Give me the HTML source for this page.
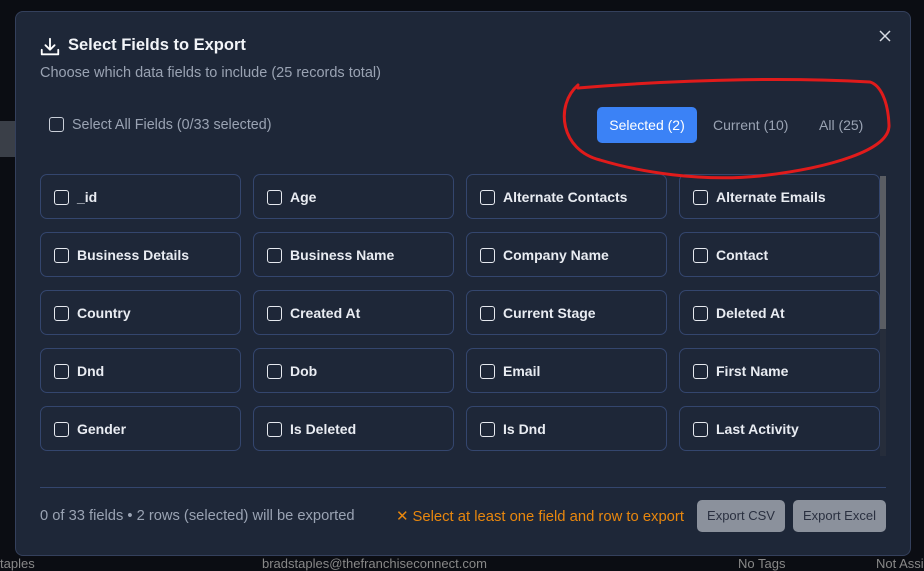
<!DOCTYPE html>
<html><head><style>
*{box-sizing:border-box;margin:0;padding:0}
body{width:924px;height:571px;overflow:hidden;background:#0b0d13;font-family:"Liberation Sans",sans-serif;position:relative}
.bgtxt{position:absolute;color:#5a6070;font-size:13px}
.modal{position:absolute;left:15px;top:11px;width:896px;height:545px;background:#1e2738;border:1px solid #34405c;border-radius:8px}
.abs{position:absolute}
.cb{position:absolute;width:15px;height:15px;border:1.5px solid #e6e9ef;border-radius:3px}
.card{position:absolute;width:201px;height:45px;border:1px solid #34466e;border-radius:7px;background:#1e2738}
.card .cb{left:13px;top:15px}
.card span{position:absolute;left:36px;top:14px;color:#e9ecf2;font-size:14px;font-weight:bold}
.btn{position:absolute;top:500px;height:32px;background:#8b919c;border-radius:5px;color:#2a3040;font-size:13px;text-align:center;line-height:32px}
</style></head><body>
<div class="bgtxt" style="left:0;top:556px;color:#888">taples</div>
<div class="bgtxt" style="left:262px;top:556px;color:#888">bradstaples@thefranchiseconnect.com</div>
<div class="bgtxt" style="left:738px;top:556px;color:#888">No Tags</div>
<div class="bgtxt" style="left:876px;top:556px;color:#888">Not Assi</div>
<div class="abs" style="left:0;top:121px;width:15px;height:36px;background:#3a3f48"></div>
<div class="modal">
<svg class="abs" style="left:23px;top:24px" width="22" height="22" viewBox="0 0 24 24" fill="none" stroke="#fff" stroke-width="2" stroke-linecap="round" stroke-linejoin="round"><path d="M12 3v12M7 10l5 5 5-5M3 15v5h18v-5"/></svg>
<div class="abs" style="left:52px;top:24px;color:#f2f4f8;font-size:16.5px;font-weight:bold">Select Fields to Export</div>
<div class="abs" style="left:24px;top:53px;color:#9aa3b3;font-size:14.5px">Choose which data fields to include (25 records total)</div>
<svg class="abs" style="left:862px;top:17px" width="14" height="14" viewBox="0 0 14 14" stroke="#d8dce4" stroke-width="1.5"><path d="M2 2l10 10M12 2L2 12"/></svg>
<div class="cb" style="left:33px;top:105px;border-color:#c9ced8"></div>
<div class="abs" style="left:56px;top:105px;color:#9aa3b3;font-size:14.3px">Select All Fields (0/33 selected)</div>
<div class="abs" style="left:581px;top:95px;width:100px;height:36px;background:#3b82f6;border-radius:5px;color:#fff;font-size:14px;text-align:center;line-height:36px">Selected (2)</div>
<div class="abs" style="left:697px;top:105px;color:#9aa3b3;font-size:14px">Current (10)</div>
<div class="abs" style="left:803px;top:105px;color:#9aa3b3;font-size:14px">All (25)</div>
<div class="abs" style="left:864px;top:164px;width:6px;height:280px;background:#262d3b"></div>
<div class="abs" style="left:864px;top:164px;width:6px;height:153px;background:#5a5d63"></div>
<div class="abs" style="left:24px;top:475px;width:846px;height:1px;background:#34466e"></div>
<div class="abs" style="left:24px;top:496px;color:#9aa3b3;font-size:14.7px">0 of 33 fields • 2 rows (selected) will be exported</div>
<div class="abs" style="left:380px;top:496px;color:#e8870e;font-size:14.8px">✕ Select at least one field and row to export</div>
</div>
<div class="card" style="left:40px;top:174px"><div class="cb"></div><span>_id</span></div>
<div class="card" style="left:253px;top:174px"><div class="cb"></div><span>Age</span></div>
<div class="card" style="left:466px;top:174px"><div class="cb"></div><span>Alternate Contacts</span></div>
<div class="card" style="left:679px;top:174px"><div class="cb"></div><span>Alternate Emails</span></div>
<div class="card" style="left:40px;top:232px"><div class="cb"></div><span>Business Details</span></div>
<div class="card" style="left:253px;top:232px"><div class="cb"></div><span>Business Name</span></div>
<div class="card" style="left:466px;top:232px"><div class="cb"></div><span>Company Name</span></div>
<div class="card" style="left:679px;top:232px"><div class="cb"></div><span>Contact</span></div>
<div class="card" style="left:40px;top:290px"><div class="cb"></div><span>Country</span></div>
<div class="card" style="left:253px;top:290px"><div class="cb"></div><span>Created At</span></div>
<div class="card" style="left:466px;top:290px"><div class="cb"></div><span>Current Stage</span></div>
<div class="card" style="left:679px;top:290px"><div class="cb"></div><span>Deleted At</span></div>
<div class="card" style="left:40px;top:348px"><div class="cb"></div><span>Dnd</span></div>
<div class="card" style="left:253px;top:348px"><div class="cb"></div><span>Dob</span></div>
<div class="card" style="left:466px;top:348px"><div class="cb"></div><span>Email</span></div>
<div class="card" style="left:679px;top:348px"><div class="cb"></div><span>First Name</span></div>
<div class="card" style="left:40px;top:406px"><div class="cb"></div><span>Gender</span></div>
<div class="card" style="left:253px;top:406px"><div class="cb"></div><span>Is Deleted</span></div>
<div class="card" style="left:466px;top:406px"><div class="cb"></div><span>Is Dnd</span></div>
<div class="card" style="left:679px;top:406px"><div class="cb"></div><span>Last Activity</span></div>
<div class="btn" style="left:697px;width:88px">Export CSV</div>
<div class="btn" style="left:793px;width:93px">Export Excel</div>
<svg class="abs" style="left:0;top:0" width="924" height="571"><path d="M578 85 C 555 105, 560 150, 600 160 C 640 172, 700 182, 760 176 C 830 168, 890 150, 889 125 C 888 100, 880 85, 870 82 C 800 78, 700 78, 578 88" fill="none" stroke="#e01b1b" stroke-width="3" stroke-linecap="round"/></svg>
</body></html>
